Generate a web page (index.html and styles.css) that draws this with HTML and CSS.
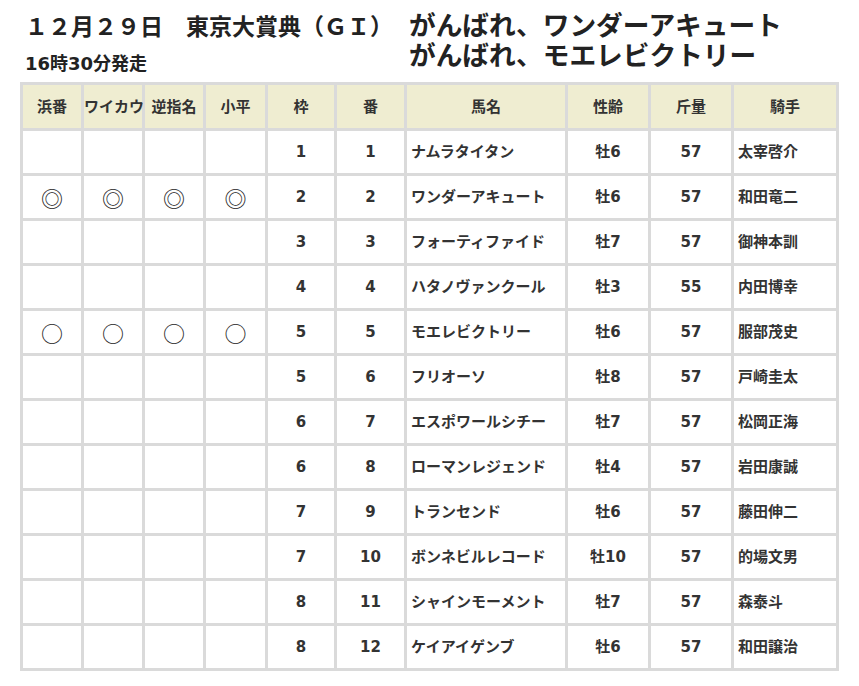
FILE: index.html
```html
<!DOCTYPE html>
<html lang="ja">
<head>
<meta charset="utf-8">
<title>東京大賞典</title>
<link rel="stylesheet" href="styles.css">
</head>
<body>
<div class="page">
  <header class="head">
    <div class="head-left">
      <h1 class="title">１２月２９日　東京大賞典（ＧＩ）</h1>
      <p class="time">16時30分発走</p>
    </div>
    <div class="head-right">
      <p class="cheer">がんばれ、ワンダーアキュート</p>
      <p class="cheer">がんばれ、モエレビクトリー</p>
    </div>
  </header>
  <table class="race">
    <thead>
      <tr>
        <th class="c1">浜番</th><th class="c2">ワイカウ</th><th class="c3">逆指名</th><th class="c4">小平</th>
        <th class="c5">枠</th><th class="c6">番</th><th class="c7">馬名</th><th class="c8">性齢</th><th class="c9">斤量</th><th class="c10">騎手</th>
      </tr>
    </thead>
    <tbody>
      <tr><td></td><td></td><td></td><td></td><td>1</td><td>1</td><td class="l">ナムラタイタン</td><td>牡6</td><td>57</td><td class="l">太宰啓介</td></tr>
      <tr><td class="m">◎</td><td class="m">◎</td><td class="m">◎</td><td class="m">◎</td><td>2</td><td>2</td><td class="l">ワンダーアキュート</td><td>牡6</td><td>57</td><td class="l">和田竜二</td></tr>
      <tr><td></td><td></td><td></td><td></td><td>3</td><td>3</td><td class="l">フォーティファイド</td><td>牡7</td><td>57</td><td class="l">御神本訓</td></tr>
      <tr><td></td><td></td><td></td><td></td><td>4</td><td>4</td><td class="l">ハタノヴァンクール</td><td>牡3</td><td>55</td><td class="l">内田博幸</td></tr>
      <tr><td class="m">○</td><td class="m">○</td><td class="m">○</td><td class="m">○</td><td>5</td><td>5</td><td class="l">モエレビクトリー</td><td>牡6</td><td>57</td><td class="l">服部茂史</td></tr>
      <tr><td></td><td></td><td></td><td></td><td>5</td><td>6</td><td class="l">フリオーソ</td><td>牡8</td><td>57</td><td class="l">戸崎圭太</td></tr>
      <tr><td></td><td></td><td></td><td></td><td>6</td><td>7</td><td class="l">エスポワールシチー</td><td>牡7</td><td>57</td><td class="l">松岡正海</td></tr>
      <tr><td></td><td></td><td></td><td></td><td>6</td><td>8</td><td class="l">ローマンレジェンド</td><td>牡4</td><td>57</td><td class="l">岩田康誠</td></tr>
      <tr><td></td><td></td><td></td><td></td><td>7</td><td>9</td><td class="l">トランセンド</td><td>牡6</td><td>57</td><td class="l">藤田伸二</td></tr>
      <tr><td></td><td></td><td></td><td></td><td>7</td><td>10</td><td class="l">ボンネビルレコード</td><td>牡10</td><td>57</td><td class="l">的場文男</td></tr>
      <tr><td></td><td></td><td></td><td></td><td>8</td><td>11</td><td class="l">シャインモーメント</td><td>牡7</td><td>57</td><td class="l">森泰斗</td></tr>
      <tr><td></td><td></td><td></td><td></td><td>8</td><td>12</td><td class="l">ケイアイゲンブ</td><td>牡6</td><td>57</td><td class="l">和田譲治</td></tr>
    </tbody>
  </table>
</div>
</body>
</html>
```
FILE: styles.css
```css
* { box-sizing: border-box; }
html, body { margin: 0; padding: 0; background: #fff; }
body {
  font-family: "DejaVu Sans", "Noto Sans CJK JP", sans-serif;
  color: #333;
}
.page { padding: 0 20px; }
.head {
  display: flex;
  padding-top: 10px;
}
.head-left {
  width: 389px;
  padding-left: 5px;
}
.title {
  margin: 0;
  font-family: "Noto Sans CJK JP", sans-serif;
  font-size: 23px;
  line-height: 30px;
  font-weight: 700;
  color: #222;
  white-space: nowrap;
}
.time {
  margin: 9px 0 0;
  font-size: 18px;
  line-height: 30px;
  font-weight: 700;
  color: #222;
}
.head-right { margin-top: -1px; }
.cheer {
  margin: 0;
  font-family: "Noto Sans CJK JP", sans-serif;
  font-size: 26.7px;
  line-height: 30px;
  font-weight: 700;
  color: #222;
  white-space: nowrap;
}
.race {
  margin-top: 3px;
  width: 819px;
  table-layout: fixed;
  border-collapse: separate;
  border-spacing: 0;
  border-top: 3px solid #dadada;
  border-left: 3px solid #dadada;
}
.race th, .race td {
  border-right: 3px solid #dadada;
  border-bottom: 3px solid #dadada;
  padding: 0;
  text-align: center;
  vertical-align: middle;
  font-size: 15px;
  line-height: 20px;
  font-weight: 700;
  color: #333;
  white-space: nowrap;
}
.race th { background: #efedd1; }
.race thead tr { height: 46px; }
.race tbody tr { height: 45px; }
.race .c1 { width: 61px; }
.race .c2 { width: 61px; }
.race .c3 { width: 61px; }
.race .c4 { width: 62px; }
.race .c5 { width: 69px; }
.race .c6 { width: 70px; }
.race .c7 { width: 161px; }
.race .c8 { width: 83px; }
.race .c9 { width: 83px; }
.race .c10 { width: 105px; }
.race td.l { text-align: left; padding-left: 4px; }
.race td.m {
  font-family: "Noto Sans CJK JP", sans-serif;
  font-weight: 400;
  font-size: 22px;
  color: #222;
}
```
